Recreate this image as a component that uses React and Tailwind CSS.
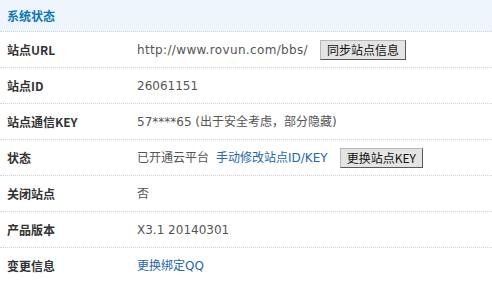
import React from 'react';

const rows = [
  { label: '站点URL', value: 'url' },
  { label: '站点ID', value: 'id' },
  { label: '站点通信KEY', value: 'key' },
  { label: '状态', value: 'status' },
  { label: '关闭站点', value: 'close' },
  { label: '产品版本', value: 'ver' },
  { label: '变更信息', value: 'change' },
];

function Btn({ children }) {
  return (
    <button className="ml-[12px] h-[20px] px-[6px] bg-[#e4e4e4] border border-[#b8b8b8] border-r-[#5a5a5a] border-b-[#5a5a5a] text-[12px] font-normal leading-none text-[#111] [font-family:'Noto_Sans_CJK_SC',sans-serif]">
      {children}
    </button>
  );
}

function Value({ kind }) {
  switch (kind) {
    case 'url':
      return (
        <>
          <span className="tracking-[0.35px]">http://www.rovun.com/bbs/</span>
          <Btn>同步站点信息</Btn>
        </>
      );
    case 'id':
      return <span>26061151</span>;
    case 'key':
      return <span>57****65 (出于安全考虑，部分隐藏)</span>;
    case 'status':
      return (
        <>
          <span>已开通云平台</span>
          <a className="ml-[7px] text-[#2467a6]">手动修改站点ID/KEY</a>
          <Btn>更换站点KEY</Btn>
        </>
      );
    case 'close':
      return <span>否</span>;
    case 'ver':
      return <span>X3.1 20140301</span>;
    default:
      return <a className="text-[#2467a6]">更换绑定QQ</a>;
  }
}

export default function App() {
  return (
    <div className="w-[492px] h-[283px] overflow-hidden bg-white text-[12px]">
      <div className="h-[32px] flex items-center pl-[7px] bg-[#eef5fd] border-b border-dotted border-[#c9d6e3]">
        <span className="font-bold text-[#0a78b4] [font-family:'Noto_Sans_CJK_SC',sans-serif]">系统状态</span>
      </div>
      {rows.map((r, i) => (
        <div
          key={r.label}
          className={
            'h-[36px] flex items-center ' +
            (i < rows.length - 1 ? 'border-b border-dotted border-[#d4d4d4]' : '')
          }
        >
          <div className="w-[137px] pl-[7px] font-bold text-[#333] [font-family:'Noto_Sans_CJK_SC',sans-serif]">
            {r.label}
          </div>
          <div className="flex items-center text-[#555] [font-family:'DejaVu_Sans','Noto_Sans_CJK_SC',sans-serif]">
            <Value kind={r.value} />
          </div>
        </div>
      ))}
    </div>
  );
}
